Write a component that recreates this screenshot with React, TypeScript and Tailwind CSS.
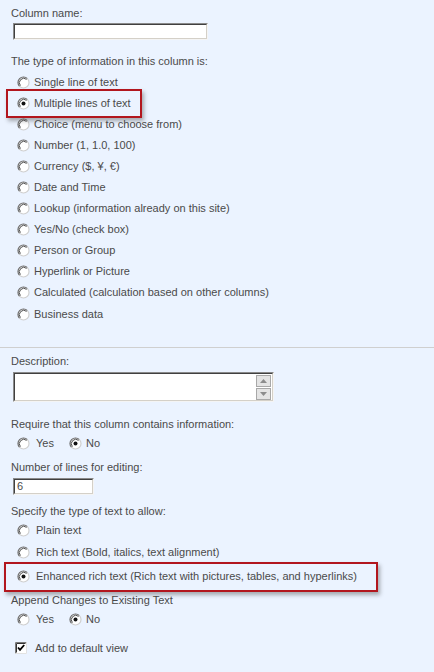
import React from 'react';

const typeOptions = [
  'Single line of text',
  'Multiple lines of text',
  'Choice (menu to choose from)',
  'Number (1, 1.0, 100)',
  'Currency ($, ¥, €)',
  'Date and Time',
  'Lookup (information already on this site)',
  'Yes/No (check box)',
  'Person or Group',
  'Hyperlink or Picture',
  'Calculated (calculation based on other columns)',
];

function Radio({ checked = false }: { checked?: boolean }) {
  return (
    <svg width="13" height="13" viewBox="0 0 13 13" className="shrink-0">
      <circle cx="6.5" cy="6.5" r="5.5" fill="#ffffff" />
      <path d="M2.6 10.4 A5.5 5.5 0 0 1 10.4 2.6" fill="none" stroke="#6b6b6b" strokeWidth="1.2" />
      <path d="M10.4 2.6 A5.5 5.5 0 0 1 2.6 10.4" fill="none" stroke="#cfcfcf" strokeWidth="1.2" />
      <path d="M3.4 9.6 A4.4 4.4 0 0 1 9.6 3.4" fill="none" stroke="#3a3a3a" strokeWidth="0.9" />
      {checked && <circle cx="6.5" cy="6.5" r="2" fill="#111111" />}
    </svg>
  );
}

function Checkbox() {
  return (
    <svg width="12" height="12" viewBox="0 0 12 12" className="shrink-0">
      <rect x="0" y="0" width="12" height="12" fill="#ffffff" />
      <path d="M0.5 11.5 V0.5 H11.5" fill="none" stroke="#7a7a7a" />
      <path d="M1.5 10.5 V1.5 H10.5" fill="none" stroke="#333333" />
      <path d="M11.5 0.5 V11.5 H0.5" fill="none" stroke="#e2e2e2" />
      <path d="M3 5.5 L5 7.8 L9.2 3" fill="none" stroke="#000000" strokeWidth="1.8" />
    </svg>
  );
}

function Sunken({ className, children }: { className: string; children?: React.ReactNode }) {
  return (
    <div className={`border border-t-[#8a8a8a] border-l-[#8a8a8a] border-b-[#f4f4f4] border-r-[#f4f4f4] ${className}`}>
      <div className="h-full w-full border border-t-[#404040] border-l-[#404040] border-b-[#d4d0c8] border-r-[#d4d0c8] bg-white">
        {children}
      </div>
    </div>
  );
}

function Label({ text, className = '' }: { text: string; className?: string }) {
  return <div className={`h-[13px] leading-[13px] ${className}`}>{text}</div>;
}

function Highlight() {
  return (
    <div className="pointer-events-none absolute inset-0 border-2 border-[#b2161e] shadow-[2px_3px_4px_rgba(80,80,80,0.45)]" />
  );
}

export default function App() {
  return (
    <div
      className="h-[672px] w-[434px] overflow-hidden bg-[#ebf3ff] text-[11px] text-[#4a4a4a]"
      style={{ fontFamily: '"Liberation Sans", Arial, sans-serif' }}
    >
      {/* Column name + type */}
      <div className="px-[11px] pt-[7px]">
        <Label text="Column name:" />
        <Sunken className="ml-[2px] mt-[3px] h-[17px] w-[195px]" />
        <Label text="The type of information in this column is:" className="mt-[15px]" />
        <div className="mt-[4px]">
          {typeOptions.map((opt, i) => (
            <div key={opt} className={i === 1 ? 'relative -ml-[5px] w-[136px]' : ''}>
              {i === 1 && <div className="absolute left-0 right-0 -top-[4px] -bottom-[4px]"><Highlight /></div>}
              <div className={`flex h-[21px] items-center gap-[4px] ${i === 1 ? 'pl-[11px]' : 'pl-[6px]'}`}>
                <Radio checked={i === 1} />
                <span>{opt}</span>
              </div>
            </div>
          ))}
          <div className="mt-[1px] flex h-[21px] items-center gap-[4px] pl-[6px]">
            <Radio />
            <span>Business data</span>
          </div>
        </div>
      </div>

      <div className="mt-[22px] border-t border-[#cfcfcf]" />

      {/* Additional settings */}
      <div className="px-[11px] pt-[7px]">
        <Label text="Description:" />
        <Sunken className="ml-[2px] mt-[4px] h-[30px] w-[261px]">
          <div className="flex h-full justify-end pr-[1px] pt-[1px]">
            <div className="flex w-[15px] flex-col gap-[1px]">
              <div className="flex h-[13px] items-center justify-center border border-[#a8a8a8] bg-[#e4e4e4]">
                <svg width="7" height="4" viewBox="0 0 7 4"><path d="M0 4 L3.5 0 L7 4 Z" fill="#8c8c8c" /></svg>
              </div>
              <div className="flex h-[13px] items-center justify-center border border-[#a8a8a8] bg-[#e4e4e4]">
                <svg width="7" height="4" viewBox="0 0 7 4"><path d="M0 0 L3.5 4 L7 0 Z" fill="#8c8c8c" /></svg>
              </div>
            </div>
          </div>
        </Sunken>

        <Label text="Require that this column contains information:" className="mt-[16px]" />
        <div className="mt-[2px] flex h-[20px] items-center pl-[6px]">
          <Radio />
          <span className="ml-[6px]">Yes</span>
          <span className="ml-[15px]"><Radio checked /></span>
          <span className="ml-[4px]">No</span>
        </div>

        <Label text="Number of lines for editing:" className="mt-[8px]" />
        <Sunken className="ml-[2px] mt-[4px] h-[17px] w-[81px]">
          <div className="pl-[2px] leading-[13px]">6</div>
        </Sunken>

        <Label text="Specify the type of text to allow:" className="mt-[10px]" />
        <div className="mt-[2px] flex h-[20px] items-center gap-[6px] pl-[6px]">
          <Radio />
          <span>Plain text</span>
        </div>
        <div className="mt-[2px] flex h-[20px] items-center gap-[6px] pl-[6px]">
          <Radio />
          <span>Rich text (Bold, italics, text alignment)</span>
        </div>
        <div className="relative -ml-[7px] mt-[4px] w-[374px]">
          <div className="absolute left-0 right-0 -top-[4px] -bottom-[6px]"><Highlight /></div>
          <div className="flex h-[20px] items-center gap-[6px] pl-[13px]">
            <Radio checked />
            <span>Enhanced rich text (Rich text with pictures, tables, and hyperlinks)</span>
          </div>
        </div>

        <Label text="Append Changes to Existing Text" className="mt-[8px]" />
        <div className="mt-[2px] flex h-[20px] items-center pl-[6px]">
          <Radio />
          <span className="ml-[6px]">Yes</span>
          <span className="ml-[15px]"><Radio checked /></span>
          <span className="ml-[4px]">No</span>
        </div>

        <div className="mt-[9px] flex h-[20px] items-center gap-[8px] pl-[4px]">
          <Checkbox />
          <span>Add to default view</span>
        </div>
      </div>
    </div>
  );
}
